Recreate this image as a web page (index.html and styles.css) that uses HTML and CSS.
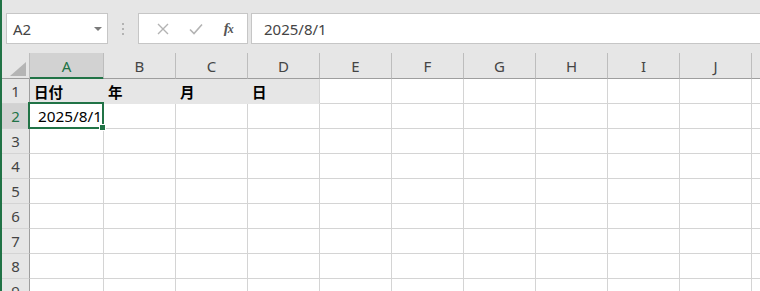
FILE: index.html
```html
<!DOCTYPE html>
<html lang="ja">
<head>
    <meta charset="UTF-8">
    <title>Book1 - Excel</title>
    <link rel="stylesheet" href="styles.css">
</head>
<body>
    <div class="app">
        <div class="toolbar">
            <div class="namebox">
                <span>A2</span>
                <svg class="caret" width="8" height="4" viewBox="0 0 8 4"><path d="M0 0h8L4 4z" fill="#7a7a7a"/></svg>
            </div>
            <div class="grip"><i></i><i></i><i></i></div>
            <div class="fxbox">
                <svg class="tool" width="12" height="12" viewBox="0 0 12 12"><path d="M1 1l10 10M11 1L1 11" stroke="#b3b3b3" stroke-width="1.4" fill="none"/></svg>
                <svg class="tool" width="14" height="12" viewBox="0 0 14 12"><path d="M1 6.5l4 4L13 1.5" stroke="#b3b3b3" stroke-width="1.6" fill="none"/></svg>
                <span class="fx">f<small>x</small></span>
            </div>
            <div class="formula">2025/8/1</div>
        </div>

        <table class="sheet">
            <colgroup>
                <col class="c-rh"><col class="c-a">
                <col><col><col><col><col><col><col><col><col><col>
            </colgroup>
            <tr class="head">
                <th class="corner"><svg width="16" height="14" viewBox="0 0 16 14"><path d="M16 0V14H0z" fill="#b5b5b5"/></svg></th>
                <th class="sel-col">A</th><th>B</th><th>C</th><th>D</th><th>E</th><th>F</th><th>G</th><th>H</th><th>I</th><th>J</th><th></th>
            </tr>
            <tr>
                <th class="rh">1</th>
                <td class="fill bold">日付</td><td class="fill bold">年</td><td class="fill bold">月</td><td class="fill bold last">日</td>
                <td></td><td></td><td></td><td></td><td></td><td></td><td></td>
            </tr>
            <tr>
                <th class="rh sel-row">2</th>
                <td class="active num">2025/8/1</td>
                <td></td><td></td><td></td><td></td><td></td><td></td><td></td><td></td><td></td><td></td>
            </tr>
            <tr><th class="rh">3</th><td></td><td></td><td></td><td></td><td></td><td></td><td></td><td></td><td></td><td></td><td></td></tr>
            <tr><th class="rh">4</th><td></td><td></td><td></td><td></td><td></td><td></td><td></td><td></td><td></td><td></td><td></td></tr>
            <tr><th class="rh">5</th><td></td><td></td><td></td><td></td><td></td><td></td><td></td><td></td><td></td><td></td><td></td></tr>
            <tr><th class="rh">6</th><td></td><td></td><td></td><td></td><td></td><td></td><td></td><td></td><td></td><td></td><td></td></tr>
            <tr><th class="rh">7</th><td></td><td></td><td></td><td></td><td></td><td></td><td></td><td></td><td></td><td></td><td></td></tr>
            <tr><th class="rh">8</th><td></td><td></td><td></td><td></td><td></td><td></td><td></td><td></td><td></td><td></td><td></td></tr>
            <tr><th class="rh">9</th><td></td><td></td><td></td><td></td><td></td><td></td><td></td><td></td><td></td><td></td><td></td></tr>
        </table>
    </div>
</body>
</html>
```

FILE: styles.css
```css
body {
    margin: 0;
    background-color: #e6e6e6;
    overflow: hidden;
    font-family: "Noto Sans", "Noto Sans CJK JP", sans-serif;
    color: #444;
}
.app {
    border-left: 2px solid #217346;
    height: 291px;
    box-sizing: border-box;
    overflow: hidden;
}
.toolbar {
    display: flex;
    height: 31px;
    padding: 13px 0 9px 4px;
}
.namebox {
    width: 102px;
    box-sizing: border-box;
    border: 1px solid #c6c6c6;
    background-color: #fff;
    display: flex;
    align-items: center;
    justify-content: space-between;
    padding: 0 5px 0 6px;
    font-size: 15px;
}
.grip {
    width: 30px;
    display: flex;
    flex-direction: column;
    align-items: center;
    justify-content: center;
    gap: 3px;
}
.grip i {
    width: 2px;
    height: 2px;
    background-color: #b3b3b3;
}
.fxbox {
    width: 110px;
    box-sizing: border-box;
    border: 1px solid #c6c6c6;
    background-color: #fff;
    display: flex;
    align-items: center;
    justify-content: space-around;
    padding: 0 4px 0 8px;
}
.fx {
    font-family: "Liberation Serif", serif;
    font-style: italic;
    font-weight: bold;
    font-size: 15px;
    color: #555;
    letter-spacing: -1px;
}
.fx small {
    font-size: 12px;
}
.formula {
    flex: 1;
    margin-left: 3px;
    border: 1px solid #c6c6c6;
    border-right: none;
    background-color: #fff;
    display: flex;
    align-items: center;
    padding-left: 12px;
    font-size: 15px;
}

/* sheet */
.sheet {
    border-collapse: separate;
    border-spacing: 0;
    table-layout: fixed;
    width: 822px;
    background-color: #fff;
}
.sheet col { width: 72px; }
.sheet col.c-rh { width: 28px; }
.sheet col.c-a { width: 74px; }
.sheet th, .sheet td {
    box-sizing: border-box;
    height: 25px;
    padding: 0;
    border-right: 1px solid #d4d4d4;
    border-bottom: 1px solid #d4d4d4;
    white-space: nowrap;
    overflow: visible;
}
.sheet th {
    background-color: #e6e6e6;
    font-weight: normal;
    font-size: 15px;
    color: #444;
}
.head th {
    height: 26px;
    border-right-color: #bdbdbd;
    border-bottom-color: #9e9e9e;
}
.head .corner {
    text-align: right;
    vertical-align: bottom;
    padding: 0 3px 2px 0;
}
.head .corner svg { display: block; margin-left: auto; }
.head .sel-col {
    background-color: #d2d2d2;
    color: #217346;
    border-bottom-color: #217346;
    box-shadow: inset 0 -1px 0 #217346;
}
.rh {
    border-right-color: #9e9e9e !important;
    border-bottom-color: #d0d0d0;
}
.rh.sel-row {
    background-color: #d2d2d2;
    color: #217346;
}
.sheet td {
    font-family: "Noto Sans CJK JP", sans-serif;
    font-size: 14.5px;
    color: #000;
    padding-left: 4px;
}
.fill {
    background-color: #e6e6e6;
    border-right-color: #e6e6e6 !important;
    border-bottom-color: #e6e6e6 !important;
}
.fill.last { border-right-color: #d4d4d4 !important; }
.bold { font-weight: bold; }
.sheet td.num {
    font-family: "Noto Sans", "Noto Sans CJK JP", sans-serif;
    font-size: 15.3px;
    text-align: right;
    padding-right: 1px;
}
.active {
    position: relative;
}
.active::before {
    content: "";
    position: absolute;
    left: -2px;
    top: -2px;
    right: -1px;
    bottom: -1px;
    border: 2px solid #217346;
}
.active::after {
    content: "";
    position: absolute;
    right: -3px;
    bottom: -3px;
    width: 5px;
    height: 5px;
    background-color: #217346;
    border: 1px solid #fff;
}
```
